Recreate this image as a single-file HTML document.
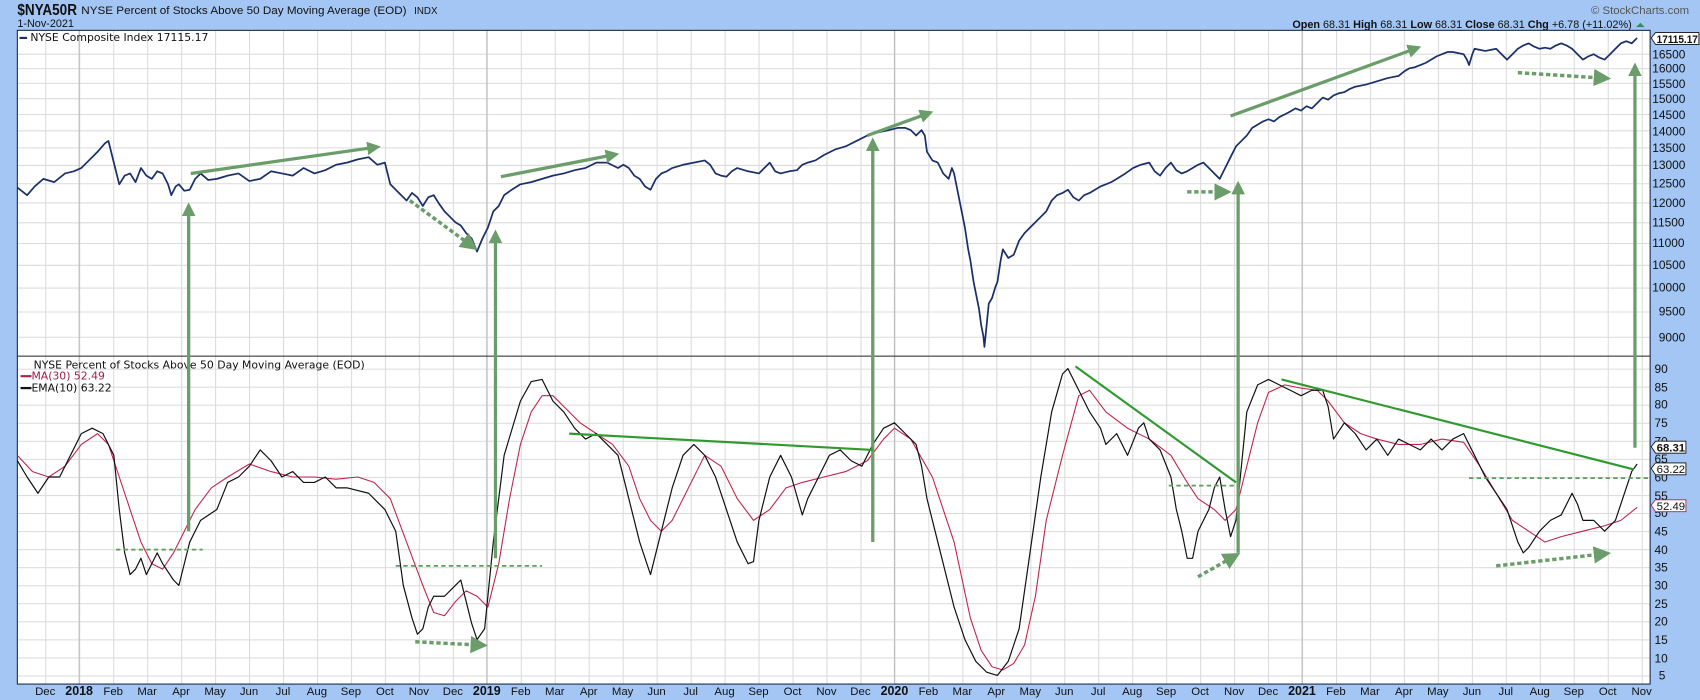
<!DOCTYPE html>
<html><head><meta charset="utf-8"><style>
html,body{margin:0;padding:0;background:#a3c6f4;}
svg{display:block}
text{font-family:"Liberation Sans",sans-serif;}
</style></head><body>
<svg width="1700" height="700" viewBox="0 0 1568 645.7" preserveAspectRatio="none" xmlns="http://www.w3.org/2000/svg">
<defs>
<pattern id="vg" x="41.7" y="0" width="31.33" height="10" patternUnits="userSpaceOnUse"><line x1="0.5" y1="0" x2="0.5" y2="10" stroke="#dcdcdc" stroke-width="1"/></pattern>
<pattern id="hg" x="0" y="340" width="10" height="16.65" patternUnits="userSpaceOnUse"><line x1="0" y1="0.5" x2="10" y2="0.5" stroke="#dcdcdc" stroke-width="1"/></pattern>
<marker id="ah" viewBox="0 0 10 10" refX="5" refY="5" markerWidth="4.2" markerHeight="4.2" orient="auto"><path d="M0,0 L10,5 L0,10 z" fill="#6a9d6a"/></marker>
<marker id="ah2" viewBox="0 0 10 10" refX="5" refY="5" markerWidth="5" markerHeight="5" orient="auto"><path d="M0,0 L10,5 L0,10 z" fill="#6a9d6a"/></marker>
</defs>
<rect x="0" y="0" width="1568" height="645.7" fill="#a3c6f4"/>
<!-- header -->
<text x="16" y="14" font-size="14.5" font-weight="bold" fill="#111" textLength="55" lengthAdjust="spacingAndGlyphs">$NYA50R</text>
<text x="75" y="13" font-size="10.5" fill="#111" textLength="300" lengthAdjust="spacingAndGlyphs">NYSE Percent of Stocks Above 50 Day Moving Average (EOD)</text>
<text x="382" y="13" font-size="9" fill="#111">INDX</text>
<text x="16" y="25" font-size="10" fill="#111">1-Nov-2021</text>
<text x="1558" y="13" font-size="10.5" fill="#555" text-anchor="end">© StockCharts.com</text>
<text x="1505" y="26" font-size="10" fill="#111" text-anchor="end"><tspan font-weight="bold">Open</tspan> 68.31 <tspan font-weight="bold">High</tspan> 68.31 <tspan font-weight="bold">Low</tspan> 68.31 <tspan font-weight="bold">Close</tspan> 68.31 <tspan font-weight="bold">Chg</tspan> +6.78 (+11.02%)</text>
<path d="M1509,25 L1513,21 L1517,25 z" fill="#3a8a5a"/>
<!-- plot area -->
<rect x="16" y="28" width="1506" height="603" fill="#fff"/>
<rect x="16" y="28" width="1506" height="603" fill="url(#vg)"/>
<rect x="16" y="340" width="1506" height="290" fill="url(#hg)"/>
<g stroke="#dcdcdc" stroke-width="1">
<line x1="16" x2="1522" y1="50" y2="50"/><line x1="16" x2="1522" y1="63.3" y2="63.3"/><line x1="16" x2="1522" y1="76.9" y2="76.9"/><line x1="16" x2="1522" y1="91" y2="91"/><line x1="16" x2="1522" y1="105.6" y2="105.6"/><line x1="16" x2="1522" y1="120.7" y2="120.7"/><line x1="16" x2="1522" y1="136.4" y2="136.4"/><line x1="16" x2="1522" y1="152.6" y2="152.6"/><line x1="16" x2="1522" y1="169.5" y2="169.5"/><line x1="16" x2="1522" y1="187.2" y2="187.2"/><line x1="16" x2="1522" y1="205.5" y2="205.5"/><line x1="16" x2="1522" y1="224.6" y2="224.6"/><line x1="16" x2="1522" y1="244.7" y2="244.7"/><line x1="16" x2="1522" y1="265.7" y2="265.7"/><line x1="16" x2="1522" y1="287.8" y2="287.8"/><line x1="16" x2="1522" y1="311.1" y2="311.1"/>
</g>
<g stroke="#bcbcbc" stroke-width="1"><line x1="73" x2="73" y1="28" y2="631"/><line x1="449" x2="449" y1="28" y2="631"/><line x1="825" x2="825" y1="28" y2="631"/><line x1="1201" x2="1201" y1="28" y2="631"/></g>
<line x1="16" x2="1522" y1="328.5" y2="328.5" stroke="#222" stroke-width="1"/>
<rect x="16" y="28" width="1506" height="603" fill="none" stroke="#1a2a4a" stroke-width="1"/>

<!-- legends -->
<line x1="18" x2="25" y1="35" y2="35" stroke="#1b2f6b" stroke-width="2"/>
<text x="28" y="38" font-size="10" fill="#111" style="font-family:'DejaVu Sans',sans-serif">NYSE Composite Index 17115.17</text>
<text x="31" y="340" font-size="10" fill="#111" style="font-family:'DejaVu Sans',sans-serif">NYSE Percent of Stocks Above 50 Day Moving Average (EOD)</text>
<line x1="19" x2="29" y1="347" y2="347" stroke="#b0224a" stroke-width="2"/>
<text x="29" y="350" font-size="10" fill="#a0204a" style="font-family:'DejaVu Sans',sans-serif">MA(30) 52.49</text>
<line x1="19" x2="29" y1="358" y2="358" stroke="#111" stroke-width="2"/>
<text x="29" y="361" font-size="10" fill="#111" style="font-family:'DejaVu Sans',sans-serif">EMA(10) 63.22</text>

<!-- NYSE line -->
<polyline fill="none" stroke="#1b2f6b" stroke-width="1.6" stroke-linejoin="round" points="16,173 25,180 32,172 40,165 50,168 60,160 68,158 75,155 82,148 90,140 97,132 100,130 105,150 110,170 115,162 120,160 125,168 130,155 135,162 140,165 145,158 150,160 155,170 158,180 162,172 165,170 170,176 175,175 180,165 185,160 192,166 200,165 210,162 220,160 230,167 240,165 250,158 260,160 270,162 280,155 290,160 300,157 310,152 320,150 330,147 340,145 348,152 355,150 360,170 368,178 375,185 380,178 385,182 390,190 395,182 400,180 405,188 410,195 415,200 420,205 425,208 430,215 435,220 440,232 445,220 450,210 455,195 460,190 465,180 472,175 480,170 490,168 500,165 510,162 520,160 530,157 540,155 550,150 560,150 570,155 575,152 580,155 585,162 590,165 595,172 600,175 605,165 610,160 615,158 620,155 630,152 640,150 650,148 655,152 660,160 665,162 670,163 675,158 680,155 690,158 700,160 705,155 710,150 715,158 720,160 728,158 735,157 740,152 745,150 752,148 760,143 770,138 780,135 790,130 800,125 810,122 820,120 828,118 835,118 840,120 845,125 850,120 853,125 855,140 860,148 865,150 870,160 875,165 878,155 880,160 883,175 885,185 888,200 890,210 893,230 895,240 898,260 900,270 903,285 905,300 907,310 908,320 910,300 912,280 915,275 918,265 920,260 923,240 925,230 930,238 935,235 940,222 945,215 950,210 955,205 960,200 965,195 970,185 975,180 980,178 985,175 990,182 995,185 1000,180 1005,178 1010,175 1015,172 1020,170 1025,168 1030,165 1038,160 1045,155 1052,152 1060,150 1065,158 1070,162 1075,155 1080,150 1085,157 1090,160 1095,158 1100,155 1105,152 1110,150 1115,155 1120,160 1125,165 1130,155 1135,145 1140,135 1145,130 1150,125 1155,118 1160,115 1165,112 1170,110 1175,112 1180,108 1188,104 1195,100 1200,102 1205,98 1210,100 1215,95 1220,90 1225,92 1230,88 1235,86 1240,85 1245,82 1250,80 1260,78 1270,75 1280,72 1290,70 1295,66 1300,63 1305,62 1310,60 1315,58 1320,55 1325,52 1330,50 1335,48 1340,48 1345,49 1350,50 1353,55 1355,60 1358,50 1360,45 1365,46 1370,47 1375,46 1380,45 1385,50 1390,55 1395,50 1400,45 1405,42 1410,40 1415,43 1420,45 1425,44 1430,45 1435,42 1440,40 1445,42 1450,45 1455,50 1460,55 1465,52 1470,50 1475,53 1480,55 1485,50 1490,45 1495,40 1500,38 1505,40 1510,35"/>

<!-- MA30 red -->
<polyline fill="none" stroke="#c0244c" stroke-width="1" stroke-linejoin="round" points="16,420 30,435 45,440 60,430 75,410 90,400 100,410 110,440 120,470 130,500 140,520 150,525 160,510 170,490 180,470 195,450 210,440 230,428 250,435 270,440 290,440 310,442 330,440 345,445 360,460 375,500 390,540 400,565 410,568 420,555 430,545 440,550 450,560 460,520 470,460 480,410 490,380 500,365 510,365 520,375 535,390 550,400 565,410 580,430 590,460 600,480 610,490 620,480 635,450 650,420 665,430 680,460 695,480 710,470 725,450 740,445 760,440 780,435 800,425 815,405 825,395 840,405 860,440 880,500 895,570 905,600 915,615 925,618 935,612 945,595 955,550 965,480 980,420 995,365 1005,360 1020,380 1040,395 1060,405 1080,420 1095,445 1105,460 1120,470 1130,480 1140,470 1150,430 1160,390 1170,362 1185,355 1200,358 1215,360 1225,370 1240,390 1255,400 1270,405 1290,410 1310,410 1330,405 1350,408 1365,430 1380,455 1395,480 1410,490 1425,500 1440,495 1460,490 1480,485 1495,480 1510,468"/>

<!-- EMA10 black -->
<polyline fill="none" stroke="#111" stroke-width="1.1" stroke-linejoin="round" points="16,425 25,440 35,455 45,440 55,440 65,420 75,400 85,395 95,400 105,420 110,470 115,510 120,530 125,525 130,515 135,530 140,520 145,510 150,520 160,535 165,540 170,520 175,500 185,480 200,470 210,445 220,440 230,430 240,415 250,425 260,440 270,435 280,445 290,445 300,440 310,450 320,450 340,455 355,470 365,490 372,540 380,570 385,585 390,580 395,560 400,550 410,550 420,540 425,535 430,555 435,575 440,590 447,580 455,500 465,420 480,370 490,352 500,350 510,370 520,380 530,395 540,405 550,400 560,410 570,420 580,460 590,500 600,530 610,490 620,450 630,420 640,410 650,420 660,440 670,470 680,500 690,520 695,518 700,480 710,440 720,420 730,440 740,475 745,460 755,440 765,420 775,415 785,425 795,430 805,410 815,395 825,390 835,400 845,410 850,430 855,460 865,500 875,540 880,560 890,590 900,610 910,620 920,623 930,610 940,580 950,510 960,440 970,380 980,345 985,340 995,360 1005,380 1015,395 1020,410 1030,400 1040,420 1050,395 1055,390 1060,405 1070,415 1080,440 1085,470 1090,490 1095,515 1100,515 1105,490 1110,480 1115,470 1120,450 1125,440 1130,470 1135,495 1140,480 1145,430 1150,380 1160,355 1170,350 1180,355 1190,360 1200,365 1210,360 1220,360 1225,375 1230,405 1240,390 1250,400 1260,415 1270,405 1280,420 1290,405 1300,410 1310,415 1320,405 1330,415 1340,405 1350,400 1360,420 1370,440 1380,455 1390,470 1400,500 1405,510 1410,505 1420,490 1430,480 1440,475 1450,455 1455,465 1460,480 1470,480 1480,490 1490,480 1500,450 1505,435 1510,428"/>

<!-- annotations -->
<g stroke="#6a9d6a" stroke-width="3" fill="none" stroke-linecap="butt">
<line x1="176" y1="160" x2="345" y2="136" marker-end="url(#ah)"/>
<line x1="462" y1="163" x2="565" y2="143" marker-end="url(#ah)"/>
<line x1="800" y1="125" x2="855" y2="105" marker-end="url(#ah)"/>
<line x1="1135" y1="107" x2="1305" y2="45" marker-end="url(#ah)"/>
<line x1="174" y1="490" x2="174" y2="193" marker-end="url(#ah)"/>
<line x1="457" y1="515" x2="457" y2="218" marker-end="url(#ah)"/>
<line x1="805" y1="500" x2="805" y2="133" marker-end="url(#ah)"/>
<line x1="1142" y1="510" x2="1142" y2="173" marker-end="url(#ah)"/>
<line x1="1508" y1="413" x2="1508" y2="64" marker-end="url(#ah)"/>
</g>
<g stroke="#6a9d6a" stroke-width="3.2" fill="none" stroke-dasharray="4,2.5">
<line x1="378" y1="185" x2="434" y2="226" marker-end="url(#ah2)"/>
<line x1="1095" y1="177" x2="1128" y2="177" marker-end="url(#ah2)"/>
<line x1="1400" y1="67" x2="1478" y2="72" marker-end="url(#ah2)"/>
<line x1="383" y1="592" x2="442" y2="595" marker-end="url(#ah2)"/>
<line x1="1105" y1="532" x2="1137" y2="514" marker-end="url(#ah2)"/>
<line x1="1380" y1="522" x2="1478" y2="511" marker-end="url(#ah2)"/>
</g>
<g stroke="#5f9a5f" stroke-width="1.6" fill="none" stroke-dasharray="4,3">
<line x1="107" y1="507" x2="187" y2="507"/>
<line x1="365" y1="522" x2="500" y2="522"/>
<line x1="1078" y1="448" x2="1142" y2="448"/>
<line x1="1355" y1="441" x2="1522" y2="441"/>
</g>
<g stroke="#2f9a2f" stroke-width="2" fill="none">
<line x1="525" y1="400" x2="805" y2="415"/>
<line x1="992" y1="338" x2="1140" y2="445"/>
<line x1="1182" y1="350" x2="1507" y2="433"/>
</g>

<!-- right axis top -->
<g font-size="11" fill="#111">
<text x="1524" y="54">16500</text><text x="1524" y="67">16000</text><text x="1524" y="81">15500</text><text x="1524" y="95">15000</text><text x="1524" y="110">14500</text><text x="1524" y="125">14000</text><text x="1524" y="140">13500</text><text x="1524" y="156">13000</text><text x="1524" y="173">12500</text><text x="1524" y="191">12000</text><text x="1524" y="209">11500</text><text x="1524" y="228">11000</text><text x="1524" y="248">10500</text><text x="1524" y="269">10000</text><text x="1530" y="291">9500</text><text x="1530" y="315">9000</text>
</g>
<path d="M1523,35 L1527,30 L1567,30 L1567,41 L1527,41 z" fill="#fff" stroke="#111" stroke-width="0.8"/>
<text x="1528" y="39.5" font-size="10.5" font-weight="bold" fill="#111" textLength="38" lengthAdjust="spacingAndGlyphs">17115.17</text>
<!-- right axis bottom -->
<g font-size="11" fill="#111">
<text x="1526" y="344">90</text><text x="1526" y="361">85</text><text x="1526" y="377">80</text><text x="1526" y="394">75</text><text x="1526" y="411">70</text><text x="1526" y="427">65</text><text x="1526" y="444">60</text><text x="1526" y="461">55</text><text x="1526" y="477">50</text><text x="1526" y="494">45</text><text x="1526" y="511">40</text><text x="1526" y="527">35</text><text x="1526" y="544">30</text><text x="1526" y="561">25</text><text x="1526" y="577">20</text><text x="1526" y="594">15</text><text x="1526" y="611">10</text><text x="1530" y="627">5</text>
</g>
<g stroke-width="0.8">
<path d="M1523,412 L1527,407 L1555,407 L1555,418 L1527,418 z" fill="#fff" stroke="#111"/>
<path d="M1523,432 L1527,427 L1555,427 L1555,438 L1527,438 z" fill="#fff" stroke="#111"/>
<path d="M1523,466 L1527,461 L1555,461 L1555,472 L1527,472 z" fill="#fff" stroke="#b0224a"/>
</g>
<text x="1528" y="416.5" font-size="10.5" font-weight="bold" fill="#111">68.31</text>
<text x="1528" y="436.5" font-size="10.5" fill="#111">63.22</text>
<text x="1528" y="470.5" font-size="10.5" fill="#111">52.49</text>

<!-- x axis labels -->
<g font-size="10.5" fill="#111" text-anchor="middle">
<text x="41.7" y="641">Dec</text><text x="73" y="641" font-weight="bold" font-size="11.5">2018</text><text x="104.4" y="641">Feb</text><text x="135.7" y="641">Mar</text><text x="167" y="641">Apr</text><text x="198.4" y="641">May</text><text x="229.7" y="641">Jun</text><text x="261" y="641">Jul</text><text x="292.3" y="641">Aug</text><text x="323.7" y="641">Sep</text><text x="355" y="641">Oct</text><text x="386.3" y="641">Nov</text>
<text x="417.7" y="641">Dec</text><text x="449" y="641" font-weight="bold" font-size="11.5">2019</text><text x="480.3" y="641">Feb</text><text x="511.7" y="641">Mar</text><text x="543" y="641">Apr</text><text x="574.3" y="641">May</text><text x="605.6" y="641">Jun</text><text x="637" y="641">Jul</text><text x="668.3" y="641">Aug</text><text x="699.6" y="641">Sep</text><text x="731" y="641">Oct</text><text x="762.3" y="641">Nov</text>
<text x="793.6" y="641">Dec</text><text x="825" y="641" font-weight="bold" font-size="11.5">2020</text><text x="856.3" y="641">Feb</text><text x="887.6" y="641">Mar</text><text x="918.9" y="641">Apr</text><text x="950.3" y="641">May</text><text x="981.6" y="641">Jun</text><text x="1012.9" y="641">Jul</text><text x="1044.3" y="641">Aug</text><text x="1075.6" y="641">Sep</text><text x="1106.9" y="641">Oct</text><text x="1138.3" y="641">Nov</text>
<text x="1169.6" y="641">Dec</text><text x="1200.9" y="641" font-weight="bold" font-size="11.5">2021</text><text x="1232.2" y="641">Feb</text><text x="1263.6" y="641">Mar</text><text x="1294.9" y="641">Apr</text><text x="1326.2" y="641">May</text><text x="1357.6" y="641">Jun</text><text x="1388.9" y="641">Jul</text><text x="1420.2" y="641">Aug</text><text x="1451.6" y="641">Sep</text><text x="1482.9" y="641">Oct</text><text x="1514.2" y="641">Nov</text>
</g>
</svg>
</body></html>
